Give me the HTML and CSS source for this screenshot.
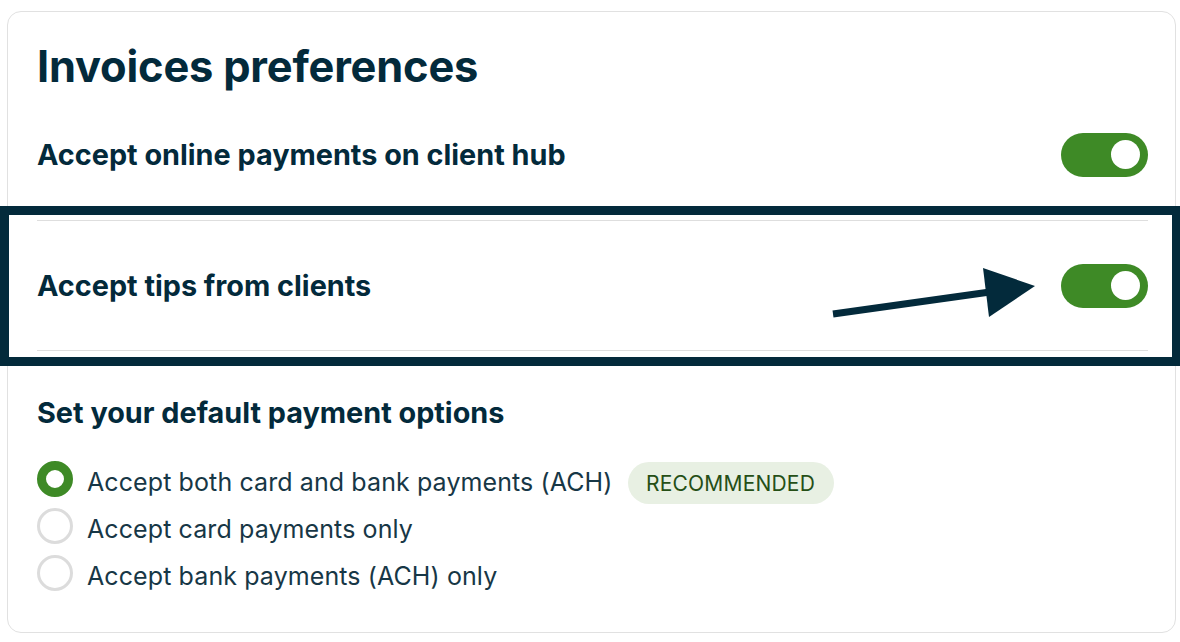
FILE: index.html
```html
<!DOCTYPE html>
<html lang="en">
<head>
<meta charset="utf-8">
<title>Invoices preferences</title>
<link rel="stylesheet" href="styles.css">
</head>
<body>
<main class="card">
  <h1 class="title">Invoices preferences</h1>
  <section class="setting-row">
    <h2 class="setting-label">Accept online payments on client hub</h2>
    <span class="toggle"><span class="knob"></span></span>
  </section>
  <section class="setting-row bordered">
    <h2 class="setting-label">Accept tips from clients</h2>
    <span class="toggle"><span class="knob"></span></span>
  </section>
  <section class="options">
    <h3 class="options-title">Set your default payment options</h3>
    <ul class="radio-list">
      <li class="radio-item"><span class="radio checked"></span><span class="radio-text">Accept both card and bank payments (ACH)</span><span class="badge">RECOMMENDED</span></li>
      <li class="radio-item"><span class="radio"></span><span class="radio-text">Accept card payments only</span></li>
      <li class="radio-item"><span class="radio"></span><span class="radio-text">Accept bank payments (ACH) only</span></li>
    </ul>
  </section>
</main>
<div class="highlight"></div>
<svg class="arrow" width="220" height="70" viewBox="820 260 220 70" aria-hidden="true">
  <line x1="833" y1="314" x2="990" y2="292" stroke="#032a3b" stroke-width="7"/>
  <polygon points="983,268 989,317 1035,286" fill="#032a3b"/>
</svg>
</body>
</html>
```
FILE: styles.css
```css
html, body {
  margin: 0;
  padding: 0;
  background: #ffffff;
}
body {
  font-family: Inter, "Noto Sans", sans-serif;
  color: #032a3b;
  width: 1180px;
  height: 642px;
  position: relative;
  overflow: hidden;
}
.card {
  box-sizing: border-box;
  margin: 11px 4px 0 7px;
  height: 622px;
  border: 1px solid #e1e1e1;
  border-radius: 14px;
  padding: 0 27px 0 29px;
}
.title {
  margin: 0;
  padding-top: 30px;
  font-size: 43.4px;
  line-height: 48px;
  font-weight: 700;
  height: 47px;
  letter-spacing: -0.2px;
}
.setting-row {
  display: flex;
  align-items: center;
  justify-content: space-between;
  height: 131px;
  box-sizing: border-box;
}
.setting-row.bordered {
  border-top: 1px solid #dedede;
  border-bottom: 1px solid #dedede;
}
.setting-label {
  margin: 0;
  font-size: 28.8px;
  font-weight: 700;
  letter-spacing: 0;
}
.toggle {
  width: 87px;
  height: 44px;
  border-radius: 22px;
  background: #3e8a26;
  display: flex;
  align-items: center;
  justify-content: flex-end;
  padding-right: 8px;
  box-sizing: border-box;
}
.knob {
  width: 29px;
  height: 29px;
  border-radius: 50%;
  background: #ffffff;
}
.options {
  padding-top: 44px;
}
.options-title {
  margin: 0 0 30px 0;
  font-size: 28.8px;
  line-height: 36px;
  font-weight: 700;
}
.radio-list {
  list-style: none;
  margin: 0;
  padding: 0;
  display: flex;
  flex-direction: column;
  gap: 11px;
}
.radio-item {
  display: flex;
  align-items: center;
  height: 36px;
}
.radio {
  box-sizing: border-box;
  width: 36px;
  height: 36px;
  border-radius: 50%;
  border: 3px solid #dcdcdc;
  margin-right: 14px;
  flex: none;
}
.radio.checked {
  border: 9.5px solid #3e8a26;
}
.radio-text {
  font-size: 25px;
  color: #173746;
  letter-spacing: 0.1px;
  padding-top: 6px;
}
.badge {
  margin-left: 15px;
  margin-top: 8px;
  height: 42px;
  width: 206px;
  border-radius: 21px;
  background: #e8f0e3;
  color: #254f16;
  font-size: 21px;
  display: flex;
  align-items: center;
  justify-content: center;
  letter-spacing: 0.2px;
  flex: none;
}
.highlight {
  position: absolute;
  left: 0;
  top: 206px;
  width: 1180px;
  height: 160px;
  box-sizing: border-box;
  border: 9px solid #032a3b;
  border-right-width: 8px;
}
.arrow {
  position: absolute;
  left: 820px;
  top: 260px;
}
```
